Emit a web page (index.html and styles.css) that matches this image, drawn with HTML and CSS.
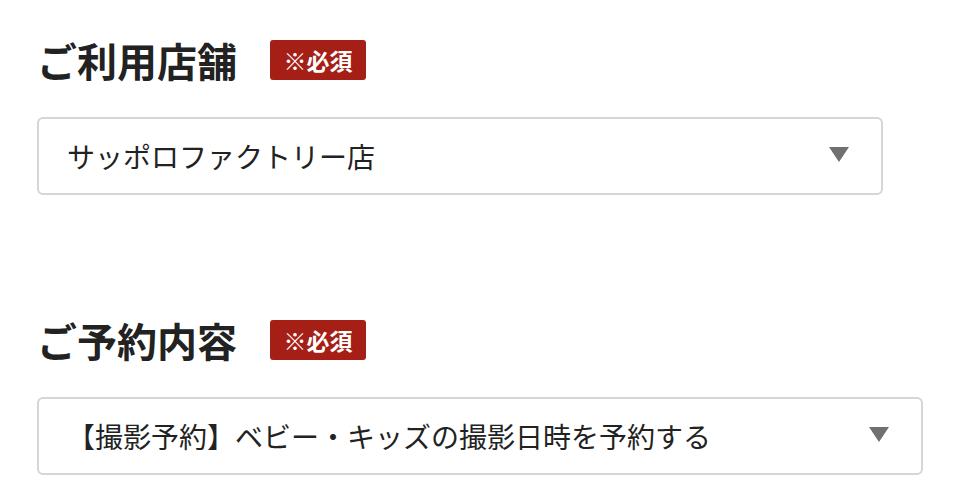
FILE: index.html
```html
<!DOCTYPE html>
<html>
	<head>
		<meta charset="utf-8" />
		<title>ご予約</title>
		<link rel="stylesheet" href="styles.css">
	</head>
	<body>
		<div class="field">
			<div class="label-row">
				<h2 class="label">ご利用店舗</h2>
				<span class="req">※必須</span>
			</div>
			<div class="select shop">
				<span class="value">サッポロファクトリー店</span>
				<i class="arrow"></i>
			</div>
		</div>
		<div class="field second">
			<div class="label-row">
				<h2 class="label">ご予約内容</h2>
				<span class="req">※必須</span>
			</div>
			<div class="select menu">
				<span class="value">【撮影予約】ベビー・キッズの撮影日時を予約する</span>
				<i class="arrow"></i>
			</div>
		</div>
	</body>
</html>
```

FILE: styles.css
```css
body{
	margin: 0;
	padding: 40px 0 0 37px;
	background: #fff;
	color: #222;
	font-family: "Noto Sans CJK JP", "Noto Sans", sans-serif;
}
.label-row{
	display: flex;
	align-items: center;
	height: 40px;
}
.label{
	margin: 0;
	font-size: 40px;
	line-height: 40px;
	font-weight: bold;
	letter-spacing: 0;
}
.req{
	margin-left: 33px;
	width: 96px;
	height: 40px;
	box-sizing: border-box;
	display: flex;
	align-items: center;
	justify-content: center;
	background: #a51f17;
	color: #fff;
	font-size: 23px;
	font-weight: bold;
	border-radius: 3px;
}
.select{
	margin-top: 37px;
	height: 78px;
	box-sizing: border-box;
	border: 2px solid #d3d5da;
	border-radius: 6px;
	display: flex;
	align-items: center;
	justify-content: space-between;
	padding: 0 32px 0 28px;
}
.shop{
	width: 846px;
}
.menu{
	width: 886px;
}
.value{
	font-size: 28px;
	line-height: 40px;
	color: #222;
}
.arrow{
	width: 0;
	height: 0;
	border-left: 10px solid transparent;
	border-right: 10px solid transparent;
	border-top: 15px solid #707070;
	margin-top: -3px;
}
.second{
	margin-top: 125px;
}
```
